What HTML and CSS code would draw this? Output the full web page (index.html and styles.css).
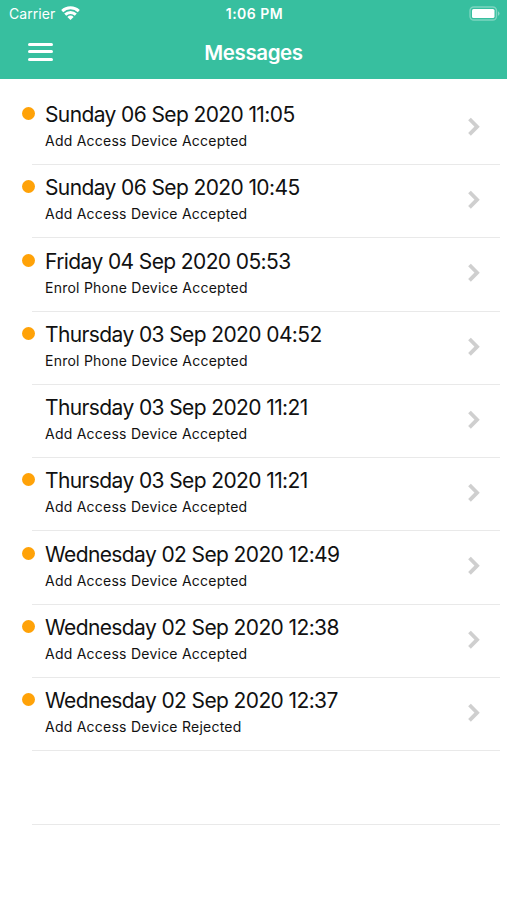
FILE: index.html
```html
<!DOCTYPE html>
<html lang="en">
<head>
    <meta charset="UTF-8">
    <meta name="viewport" content="width=device-width, initial-scale=1.0">
    <title>Messages</title>
    <link rel="stylesheet" href="styles.css">
</head>
<body>
    <header class="header">
        <div class="status-bar">
            <div class="carrier">
                <span class="carrier-name">Carrier</span>
                <svg class="wifi" width="19" height="14" viewBox="0 0 19 14" fill="none" stroke="#fff" stroke-width="2.9">
                    <path d="M1.2 5.1a12 12 0 0 1 16.6 0"/>
                    <path d="M4.2 8.6a7.6 7.6 0 0 1 10.6 0"/>
                    <path d="M9.5 14L6.4 10.9a4.4 4.4 0 0 1 6.2 0z" fill="#fff" stroke="none"/>
                </svg>
            </div>
            <div class="time">1:06 PM</div>
            <svg class="battery" width="31" height="15" viewBox="0 0 31 15">
                <rect x="1" y="1" width="26.5" height="13" rx="3.8" fill="none" stroke="#fff" stroke-width="1.4" stroke-opacity="0.35"/>
                <rect x="3" y="3" width="22.5" height="9" rx="1.6" fill="#fff"/>
                <path d="M29 5.2a2.5 2.5 0 0 1 0 4.6z" fill="#fff" fill-opacity="0.4"/>
            </svg>
        </div>
        <div class="nav-bar">
            <div class="menu">
                <span></span>
                <span></span>
                <span></span>
            </div>
            <h1 class="title">Messages</h1>
        </div>
    </header>

    <ul class="messages" id="messages"></ul>

    <script>
        const messages = [
            { date: "Sunday 06 Sep 2020 11:05", text: "Add Access Device Accepted", unread: true },
            { date: "Sunday 06 Sep 2020 10:45", text: "Add Access Device Accepted", unread: true },
            { date: "Friday 04 Sep 2020 05:53", text: "Enrol Phone Device Accepted", unread: true },
            { date: "Thursday 03 Sep 2020 04:52", text: "Enrol Phone Device Accepted", unread: true },
            { date: "Thursday 03 Sep 2020 11:21", text: "Add Access Device Accepted", unread: false },
            { date: "Thursday 03 Sep 2020 11:21", text: "Add Access Device Accepted", unread: true },
            { date: "Wednesday 02 Sep 2020 12:49", text: "Add Access Device Accepted", unread: true },
            { date: "Wednesday 02 Sep 2020 12:38", text: "Add Access Device Accepted", unread: true },
            { date: "Wednesday 02 Sep 2020 12:37", text: "Add Access Device Rejected", unread: true }
        ];

        const list = document.getElementById("messages");

        messages.forEach(message => {
            const row = document.createElement("li");
            row.className = "message";
            row.innerHTML = `
                <span class="dot${message.unread ? " unread" : ""}"></span>
                <div class="body">
                    <div class="date"><span>${message.date}</span></div>
                    <div class="text"><span>${message.text}</span></div>
                </div>
                <svg class="chevron" width="14" height="20" viewBox="0 0 14 20" fill="none" stroke="#cfcfcf" stroke-width="3.8">
                    <path d="M2.5 2l7.6 7.7-7.6 7.7"/>
                </svg>`;
            list.appendChild(row);
        });

        // empty row under the last message
        const empty = document.createElement("li");
        empty.className = "message";
        list.appendChild(empty);
    </script>
</body>
</html>
```
FILE: styles.css
```css
body {
    margin: 0;
    padding: 0;
    background: #fff;
    color: #111;
    font-family: Inter, sans-serif;
}

.header {
    height: 79px;
    background: #37bf9f;
    color: #fff;
}

.status-bar {
    display: grid;
    grid-template-columns: 1fr auto 1fr;
    align-items: center;
    height: 26px;
    padding: 0 7px 0 9px;
}

.carrier {
    display: flex;
    align-items: center;
    gap: 6px;
}

.carrier-name {
    font-size: 14px;
    letter-spacing: 0.05px;
}

.time {
    font-size: 14px;
    font-weight: 600;
    letter-spacing: 0.5px;
}

.battery {
    justify-self: end;
}

.nav-bar {
    display: grid;
    grid-template-columns: 1fr auto 1fr;
    align-items: center;
    height: 53px;
    padding: 0 28px;
}

.menu {
    display: flex;
    flex-direction: column;
    gap: 4.5px;
    width: 24.5px;
    margin-bottom: 1.5px;
}

.menu span {
    height: 3px;
    border-radius: 1.5px;
    background: #fff;
}

.title {
    margin: 0;
    font-size: 20.5px;
    font-weight: 600;
    letter-spacing: -0.4px;
}

.messages {
    margin: 0;
    padding: 12.7px 7px 0 32px;
    list-style: none;
}

.message {
    display: flex;
    height: 72.3px;
    border-bottom: 1px solid #e9e9e9;
}

.dot {
    flex: none;
    width: 13px;
    height: 13px;
    margin: 15.3px 10.5px 0 -10.5px;
    border-radius: 50%;
}

.unread {
    background: #ffa208;
}

.body {
    flex: 1;
    padding-top: 10.3px;
}

.date {
    font-size: 21px;
    line-height: 26px;
    letter-spacing: -0.61px;
}

.text {
    font-size: 14px;
    line-height: 26px;
    letter-spacing: 0.24px;
}

.chevron {
    margin: 25px 19px 0 0;
}
```
